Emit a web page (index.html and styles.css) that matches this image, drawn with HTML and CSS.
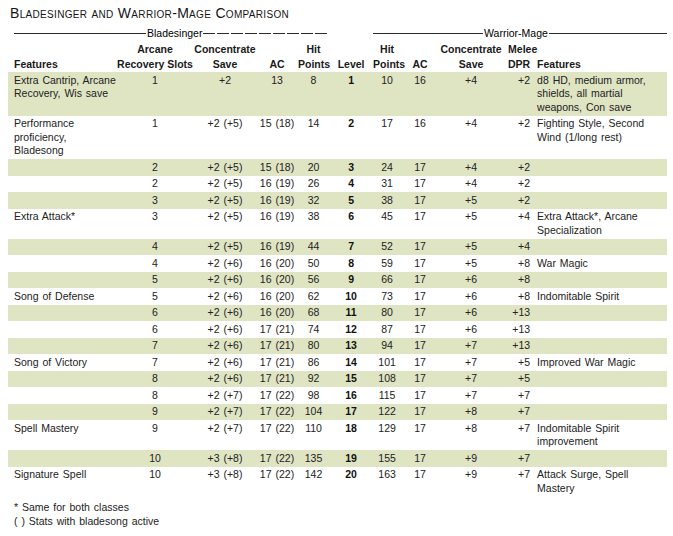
FILE: index.html
```html
<!DOCTYPE html>
<html lang="en">
<head>
<meta charset="utf-8">
<title>Bladesinger and Warrior-Mage Comparison</title>
<link rel="stylesheet" href="styles.css">
</head>
<body>
<div class="page">
  <h1 class="title">Bladesinger and Warrior-Mage Comparison</h1>
  <table class="cmp">
    <colgroup>
      <col class="w-feat"><col class="w-arc"><col class="w-conc"><col class="w-ac"><col class="w-hp">
      <col class="w-lvl"><col class="w-hp2"><col class="w-ac2"><col class="w-conc2"><col class="w-dpr"><col class="w-feat2">
    </colgroup>
    <thead>
      <tr class="groups">
        <th colspan="5" class="group group-left"><div class="grule"><span class="rule rule-lead-b"></span><span class="glabel">Bladesinger</span><span class="rule dashed"></span></div></th>
        <th></th>
        <th colspan="5" class="group group-right"><div class="grule"><span class="rule rule-lead-w"></span><span class="glabel">Warrior-Mage</span><span class="rule"></span></div></th>
      </tr>
      <tr class="head-a">
        <th></th><th>Arcane</th><th>Concentrate</th><th></th><th>Hit</th><th></th><th>Hit</th><th></th><th>Concentrate</th><th class="melee">Melee</th><th></th>
      </tr>
      <tr class="head-b">
        <th>Features</th><th>Recovery Slots</th><th>Save</th><th>AC</th><th>Points</th><th>Level</th><th>Points</th><th>AC</th><th>Save</th><th>DPR</th><th>Features</th>
      </tr>
    </thead>
    <tbody>
      <tr><td>Extra Cantrip, Arcane<br>Recovery, Wis save</td><td>1</td><td>+2</td><td>13</td><td>8</td><td>1</td><td>10</td><td>16</td><td>+4</td><td>+2</td><td>d8 HD, medium armor,<br>shields, all martial<br>weapons, Con save</td></tr>
      <tr><td>Performance<br>proficiency,<br>Bladesong</td><td>1</td><td>+2 (+5)</td><td>15 (18)</td><td>14</td><td>2</td><td>17</td><td>16</td><td>+4</td><td>+2</td><td>Fighting Style, Second<br>Wind (1/long rest)</td></tr>
      <tr><td></td><td>2</td><td>+2 (+5)</td><td>15 (18)</td><td>20</td><td>3</td><td>24</td><td>17</td><td>+4</td><td>+2</td><td></td></tr>
      <tr><td></td><td>2</td><td>+2 (+5)</td><td>16 (19)</td><td>26</td><td>4</td><td>31</td><td>17</td><td>+4</td><td>+2</td><td></td></tr>
      <tr><td></td><td>3</td><td>+2 (+5)</td><td>16 (19)</td><td>32</td><td>5</td><td>38</td><td>17</td><td>+5</td><td>+2</td><td></td></tr>
      <tr><td>Extra Attack*</td><td>3</td><td>+2 (+5)</td><td>16 (19)</td><td>38</td><td>6</td><td>45</td><td>17</td><td>+5</td><td>+4</td><td>Extra Attack*, Arcane<br>Specialization</td></tr>
      <tr><td></td><td>4</td><td>+2 (+5)</td><td>16 (19)</td><td>44</td><td>7</td><td>52</td><td>17</td><td>+5</td><td>+4</td><td></td></tr>
      <tr><td></td><td>4</td><td>+2 (+6)</td><td>16 (20)</td><td>50</td><td>8</td><td>59</td><td>17</td><td>+5</td><td>+8</td><td>War Magic</td></tr>
      <tr><td></td><td>5</td><td>+2 (+6)</td><td>16 (20)</td><td>56</td><td>9</td><td>66</td><td>17</td><td>+6</td><td>+8</td><td></td></tr>
      <tr><td>Song of Defense</td><td>5</td><td>+2 (+6)</td><td>16 (20)</td><td>62</td><td>10</td><td>73</td><td>17</td><td>+6</td><td>+8</td><td>Indomitable Spirit</td></tr>
      <tr><td></td><td>6</td><td>+2 (+6)</td><td>16 (20)</td><td>68</td><td>11</td><td>80</td><td>17</td><td>+6</td><td>+13</td><td></td></tr>
      <tr><td></td><td>6</td><td>+2 (+6)</td><td>17 (21)</td><td>74</td><td>12</td><td>87</td><td>17</td><td>+6</td><td>+13</td><td></td></tr>
      <tr><td></td><td>7</td><td>+2 (+6)</td><td>17 (21)</td><td>80</td><td>13</td><td>94</td><td>17</td><td>+7</td><td>+13</td><td></td></tr>
      <tr><td>Song of Victory</td><td>7</td><td>+2 (+6)</td><td>17 (21)</td><td>86</td><td>14</td><td>101</td><td>17</td><td>+7</td><td>+5</td><td>Improved War Magic</td></tr>
      <tr><td></td><td>8</td><td>+2 (+6)</td><td>17 (21)</td><td>92</td><td>15</td><td>108</td><td>17</td><td>+7</td><td>+5</td><td></td></tr>
      <tr><td></td><td>8</td><td>+2 (+7)</td><td>17 (22)</td><td>98</td><td>16</td><td>115</td><td>17</td><td>+7</td><td>+7</td><td></td></tr>
      <tr><td></td><td>9</td><td>+2 (+7)</td><td>17 (22)</td><td>104</td><td>17</td><td>122</td><td>17</td><td>+8</td><td>+7</td><td></td></tr>
      <tr><td>Spell Mastery</td><td>9</td><td>+2 (+7)</td><td>17 (22)</td><td>110</td><td>18</td><td>129</td><td>17</td><td>+8</td><td>+7</td><td>Indomitable Spirit<br>improvement</td></tr>
      <tr><td></td><td>10</td><td>+3 (+8)</td><td>17 (22)</td><td>135</td><td>19</td><td>155</td><td>17</td><td>+9</td><td>+7</td><td></td></tr>
      <tr><td>Signature Spell</td><td>10</td><td>+3 (+8)</td><td>17 (22)</td><td>142</td><td>20</td><td>163</td><td>17</td><td>+9</td><td>+7</td><td>Attack Surge, Spell<br>Mastery</td></tr>
    </tbody>
  </table>
  <div class="notes">
    <p>* Same for both classes</p>
    <p>( ) Stats with bladesong active</p>
  </div>
</div>
</body>
</html>
```
FILE: styles.css
```css
* { box-sizing: border-box; }

body {
  margin: 0;
  background: #ffffff;
  color: #222222;
  font-family: "Liberation Sans", Arial, sans-serif;
  font-size: 10.5px;
}

.page {
  width: 673px;
  padding: 5px 0 0 8px;
}

.title {
  margin: 0 0 5px 2px;
  font-size: 14px;
  line-height: 16px;
  letter-spacing: 0.32px;
  font-weight: normal;
  font-variant: small-caps;
  color: #151515;
}

.cmp {
  border-collapse: collapse;
  table-layout: fixed;
  width: 659px;
}

.w-feat { width: 108px; }
.w-arc { width: 78px; }
.w-conc { width: 62px; }
.w-ac { width: 42px; }
.w-hp { width: 31px; }
.w-lvl { width: 44px; }
.w-hp2 { width: 28px; }
.w-ac2 { width: 38px; }
.w-conc2 { width: 64px; }
.w-dpr { width: 28px; }
.w-feat2 { width: 136px; }

.cmp th,
.cmp td {
  padding: 0;
  white-space: nowrap;
  text-align: center;
  vertical-align: top;
}

.cmp th {
  font-weight: bold;
  color: #1a1a1a;
}

/* group rule row */
.groups th { height: 14px; line-height: 14px; }
.group-left { padding: 0 1px 0 2px; }
.group-right { padding: 0 5px 0 0; }
.grule {
  display: flex;
  align-items: center;
}
.rule {
  flex: 1 1 auto;
  height: 1px;
  background: #2a2a2a;
}
.rule.dashed {
  background: repeating-linear-gradient(90deg, #2a2a2a 0 12px, transparent 12px 14px);
}
.rule-lead-b { flex: 0 0 132px; }
.rule-lead-w { flex: 0 0 110px; }
.glabel { padding: 0 1px; font-weight: normal; color: #000; }

.head-a th { height: 16px; line-height: 14px; padding-top: 2px; }
.head-b th { height: 16px; line-height: 14px; padding-top: 1px; }

.head-a th.melee { text-align: left; padding-left: 5px; }

.cmp th:nth-child(1),
.cmp td:nth-child(1) { text-align: left; padding-left: 6px; }
.cmp th:nth-child(10),
.cmp td:nth-child(10) { text-align: right; padding-right: 1px; }
.cmp th:nth-child(11),
.cmp td:nth-child(11) { text-align: left; padding-left: 6px; }

.cmp tbody td {
  line-height: 13.5px;
  padding-top: 1.5px;
  padding-bottom: 1.5px;
  word-spacing: 1px;
}
.cmp tbody td:nth-child(6) { font-weight: bold; color: #111; }

.cmp tbody tr:nth-child(odd) { background: #dfe4c2; }

.notes {
  margin: 3.5px 0 0 6px;
  line-height: 14px;
}
.notes p { margin: 0; word-spacing: 1px; }
```
